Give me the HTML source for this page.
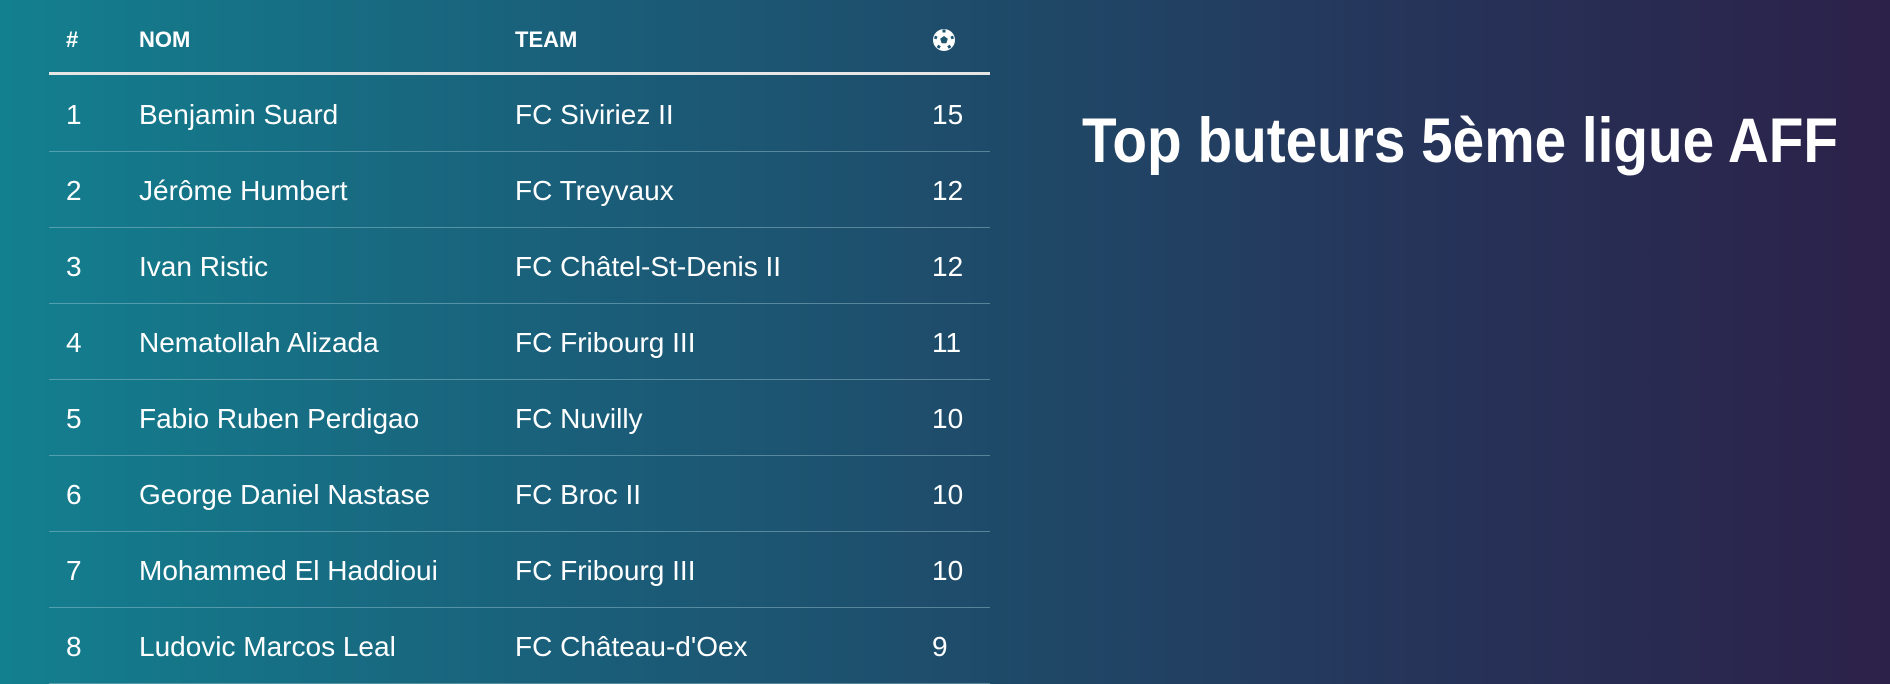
<!DOCTYPE html>
<html><head><meta charset="utf-8"><style>
html,body{margin:0;padding:0;}
body{width:1890px;height:684px;overflow:hidden;position:relative;font-family:"Liberation Sans",sans-serif;color:#fff;
background:linear-gradient(90deg,#13808f 0%,#1a5f7a 30%,#1f4867 55%,#26345a 75%,#2c2149 100%);}
.hdr{position:absolute;top:0;left:49px;width:941px;height:72px;border-bottom:3.5px solid #e6e6e6;}
.h{position:absolute;top:27px;font-weight:bold;font-size:22px;line-height:26px;}
.row{position:absolute;left:49px;width:941px;height:75px;border-bottom:1.5px solid rgba(160,200,210,0.45);}
.c{position:absolute;top:22px;font-size:28px;line-height:34px;}
.title{position:absolute;left:1082px;top:104px;font-weight:bold;font-size:63px;line-height:74px;white-space:nowrap;transform:scaleX(0.9);transform-origin:left top;}
</style></head><body>
<div class="hdr">
<div class="h" style="left:17px">#</div>
<div class="h" style="left:90px">NOM</div>
<div class="h" style="left:466px">TEAM</div>
<svg style="position:absolute;left:883px;top:28px" width="24" height="24" viewBox="0 0 24 24"><circle cx="12" cy="12" r="11" fill="#fff"/><polygon points="12,8 15.8,10.8 14.4,15.2 9.6,15.2 8.2,10.8" fill="#1d566f"/><path d="M12 1.5 L12 4.5 M2.5 9 L5 10 M21.5 9 L19 10 M6 20 L7.5 17.5 M18 20 L16.5 17.5" stroke="#1d566f" stroke-width="3"/></svg>
</div>
<div class="row" style="top:76px"><div class="c" style="left:17px">1</div><div class="c" style="left:90px">Benjamin Suard</div><div class="c" style="left:466px">FC Siviriez II</div><div class="c" style="left:883px">15</div></div>
<div class="row" style="top:152px"><div class="c" style="left:17px">2</div><div class="c" style="left:90px">Jérôme Humbert</div><div class="c" style="left:466px">FC Treyvaux</div><div class="c" style="left:883px">12</div></div>
<div class="row" style="top:228px"><div class="c" style="left:17px">3</div><div class="c" style="left:90px">Ivan Ristic</div><div class="c" style="left:466px">FC Châtel-St-Denis II</div><div class="c" style="left:883px">12</div></div>
<div class="row" style="top:304px"><div class="c" style="left:17px">4</div><div class="c" style="left:90px">Nematollah Alizada</div><div class="c" style="left:466px">FC Fribourg III</div><div class="c" style="left:883px">11</div></div>
<div class="row" style="top:380px"><div class="c" style="left:17px">5</div><div class="c" style="left:90px">Fabio Ruben Perdigao</div><div class="c" style="left:466px">FC Nuvilly</div><div class="c" style="left:883px">10</div></div>
<div class="row" style="top:456px"><div class="c" style="left:17px">6</div><div class="c" style="left:90px">George Daniel Nastase</div><div class="c" style="left:466px">FC Broc II</div><div class="c" style="left:883px">10</div></div>
<div class="row" style="top:532px"><div class="c" style="left:17px">7</div><div class="c" style="left:90px">Mohammed El Haddioui</div><div class="c" style="left:466px">FC Fribourg III</div><div class="c" style="left:883px">10</div></div>
<div class="row" style="top:608px"><div class="c" style="left:17px">8</div><div class="c" style="left:90px">Ludovic Marcos Leal</div><div class="c" style="left:466px">FC Château-d'Oex</div><div class="c" style="left:883px">9</div></div>
<div class="title">Top buteurs 5ème ligue AFF</div>
</body></html>
